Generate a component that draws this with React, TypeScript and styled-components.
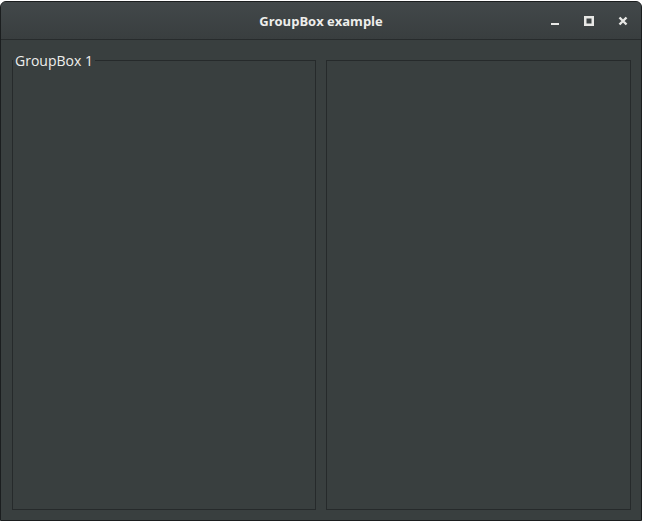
import React from 'react';
import styled, { createGlobalStyle } from 'styled-components';

const GlobalStyle = createGlobalStyle`
  html, body {
    margin: 0;
    padding: 0;
    background: #ffffff;
  }
  body {
    font-family: 'Open Sans', 'Noto Sans', 'DejaVu Sans', sans-serif;
  }
`;

const Window = styled.div`
  box-sizing: border-box;
  width: 642px;
  height: 520px;
  margin-top: 1px;
  border: 1px solid #1b1e1f;
  border-radius: 6px 6px 0 0;
  background: #393f3f;
  display: flex;
  flex-direction: column;
  overflow: hidden;
`;

const TitleBar = styled.div`
  height: 37px;
  flex: none;
  display: grid;
  grid-template-columns: 1fr auto 1fr;
  align-items: center;
  background: linear-gradient(#42484a, #393e3f);
  border-bottom: 1px solid #272b2c;
  color: #eeeeec;
`;

const Title = styled.div`
  grid-column: 2;
  font-size: 13px;
  font-weight: 700;
`;

const Controls = styled.div`
  grid-column: 3;
  justify-self: end;
  display: flex;
  align-items: center;
  padding-right: 1px;
`;

const ControlButton = styled.div`
  width: 34px;
  height: 37px;
  display: flex;
  align-items: center;
  justify-content: center;
`;

const Content = styled.div`
  flex: 1;
  box-sizing: border-box;
  padding: 13px 10px 10px 11px;
  display: grid;
  grid-template-columns: 304px 305px;
  column-gap: 10px;
`;

const Group = styled.fieldset`
  margin: 0;
  padding: 0;
  min-width: 0;
  border: 1px solid #262a2b;
`;

const Legend = styled.legend<{ $empty?: boolean }>`
  margin-left: 0;
  padding: ${(p) => (p.$empty ? '0' : '0 2px')};
  width: ${(p) => (p.$empty ? '0' : 'auto')};
  height: 15px;
  font-size: 14px;
  line-height: 15px;
  color: #eeeeec;
`;

const Minimize = () => (
  <svg width="10" height="10" viewBox="0 0 10 10">
    <rect x="1" y="7" width="8" height="2" fill="#e8e8e6" />
  </svg>
);

const Maximize = () => (
  <svg width="10" height="10" viewBox="0 0 10 10">
    <rect x="1.25" y="1.25" width="7.5" height="7.5" fill="none" stroke="#e8e8e6" strokeWidth="2.5" />
  </svg>
);

const Close = () => (
  <svg width="10" height="10" viewBox="0 0 10 10">
    <path d="M1.5 1.5 L8.5 8.5 M8.5 1.5 L1.5 8.5" stroke="#e8e8e6" strokeWidth="2.4" />
  </svg>
);

const App: React.FC = () => {
  return (
    <>
      <GlobalStyle />
      <Window>
        <TitleBar>
          <Title>GroupBox example</Title>
          <Controls>
            <ControlButton>
              <Minimize />
            </ControlButton>
            <ControlButton>
              <Maximize />
            </ControlButton>
            <ControlButton>
              <Close />
            </ControlButton>
          </Controls>
        </TitleBar>
        <Content>
          <Group>
            <Legend>GroupBox 1</Legend>
          </Group>
          <Group>
            <Legend $empty />
          </Group>
        </Content>
      </Window>
    </>
  );
};

export default App;
